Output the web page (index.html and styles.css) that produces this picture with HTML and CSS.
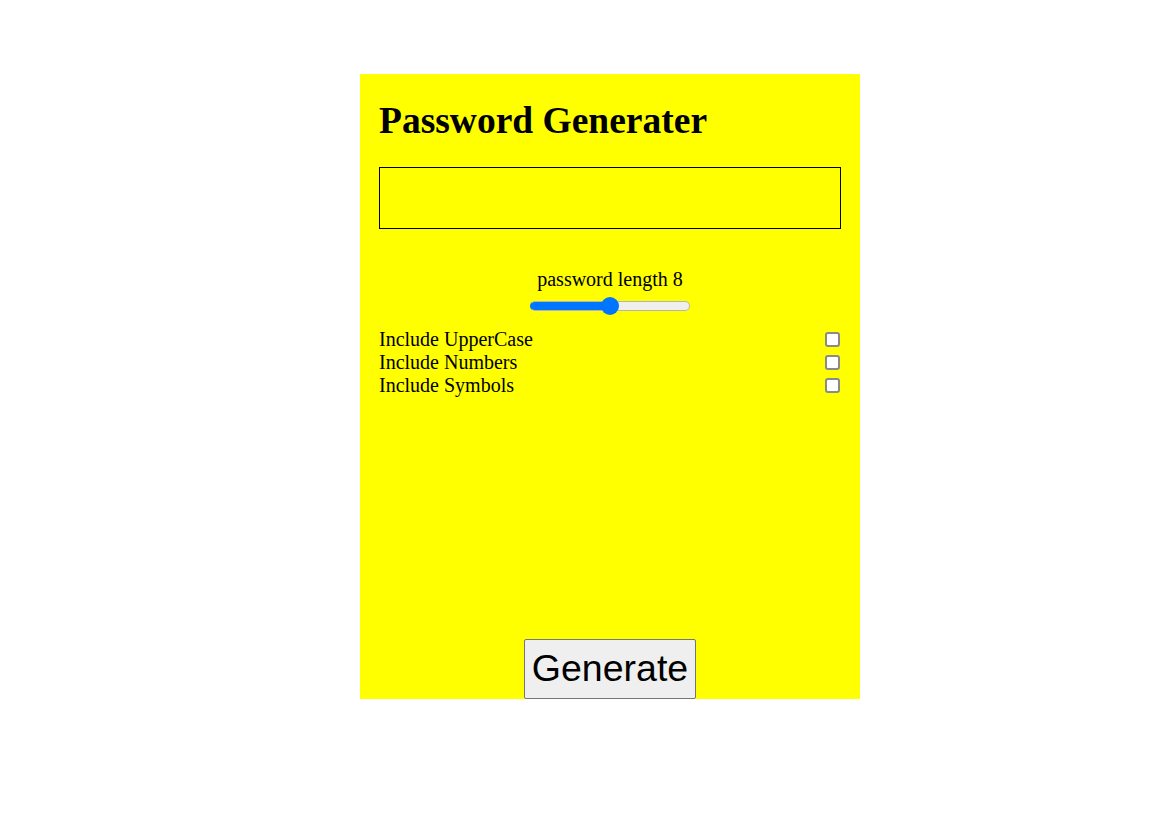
FILE: index.html
```html
<!DOCTYPE html>
<html>
<head>
<meta charset="utf-8">
<title>Password Generater</title>
<link rel="stylesheet" href="styles.css">
</head>
<body>
<div class="card">
  <h1 class="title">Password Generater</h1>
  <input class="output" type="text" readonly>
  <div class="length">
    <label class="length-label">password length 8</label>
    <input class="slider" type="range" min="0" max="16" value="8">
  </div>
  <div class="options">
    <label class="option"><span>Include UpperCase</span><input class="check" type="checkbox"></label>
    <label class="option"><span>Include Numbers</span><input class="check" type="checkbox"></label>
    <label class="option"><span>Include Symbols</span><input class="check" type="checkbox"></label>
  </div>
  <button class="generate">Generate</button>
</div>
</body>
</html>
```
FILE: styles.css
```css
html, body {
  margin: 0;
  padding: 0;
  background: #ffffff;
}

body {
  font-family: "Liberation Serif", "Times New Roman", serif;
  color: #000;
}

.card {
  box-sizing: border-box;
  width: 500px;
  height: 625px;
  margin: 74px 0 0 360px;
  padding: 0 19px;
  background: #ffff00;
  display: flex;
  flex-direction: column;
}

.title {
  font-size: 37.5px;
  line-height: 43px;
  font-weight: bold;
  margin: 25px 0 25px;
}

.output {
  box-sizing: border-box;
  width: 100%;
  height: 62px;
  margin: 0;
  border: 1px solid #000;
  background: transparent;
  outline: none;
}

.length {
  display: flex;
  flex-direction: column;
  align-items: center;
  margin-top: 39px;
}

.length-label {
  font-size: 20px;
  line-height: 23px;
}

.slider {
  -webkit-appearance: none;
  appearance: none;
  width: 160px;
  height: 18px;
  margin: 6px 0 0;
  padding: 0;
  background: transparent;
}

.slider::-webkit-slider-runnable-track {
  box-sizing: border-box;
  height: 10px;
  border-radius: 5px;
  border: 1px solid #b5b5b5;
  border-left-color: #0075ff;
  background: linear-gradient(to right, #0075ff 50%, #efefef 50%);
}

.slider::-webkit-slider-thumb {
  -webkit-appearance: none;
  appearance: none;
  width: 18px;
  height: 18px;
  margin-top: -5px;
  border: none;
  border-radius: 50%;
  background: #0075ff;
}

.options {
  display: flex;
  flex-direction: column;
  margin-top: 13px;
}

.option {
  display: flex;
  justify-content: space-between;
  align-items: center;
  font-size: 20px;
  line-height: 23px;
}

.check {
  -webkit-appearance: none;
  appearance: none;
  box-sizing: border-box;
  width: 15px;
  height: 15px;
  margin: 0 1px 0 0;
  border: 2px solid #8a8a8a;
  border-radius: 3px;
  background: #ffffff;
}

.generate {
  margin-top: auto;
  align-self: center;
  font-family: "Liberation Sans", Arial, sans-serif;
  font-size: 37.5px;
  line-height: 43px;
  padding: 7px 7px 8px;
  border: 1px solid #767676;
  border-radius: 2px;
  background: #efefef;
  color: #000;
}
```
